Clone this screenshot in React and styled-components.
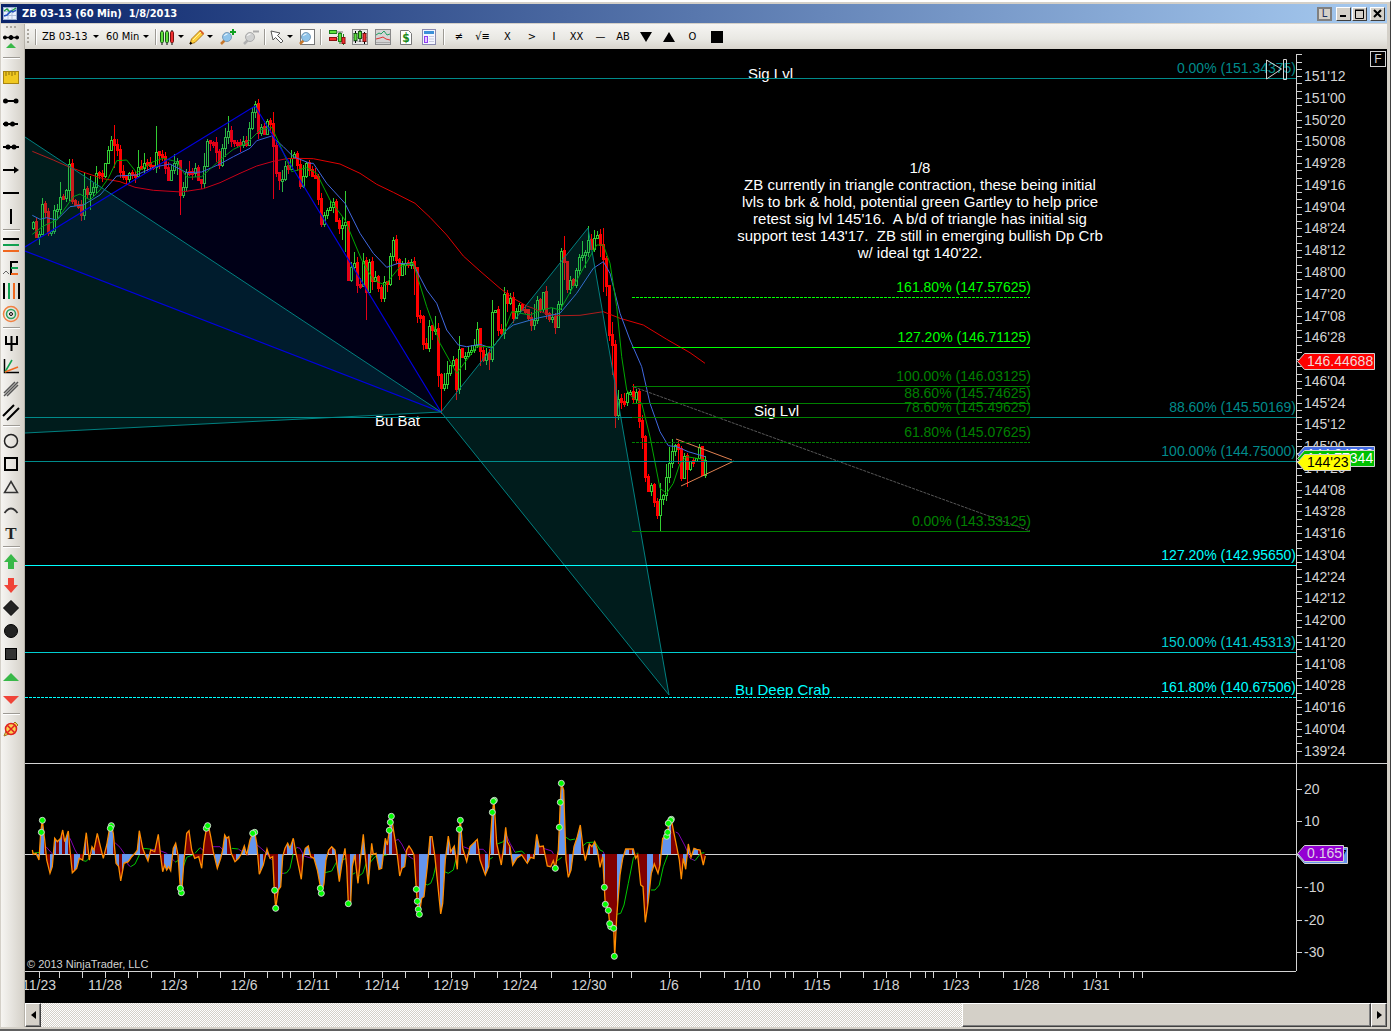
import React from 'react'
import styled, { createGlobalStyle } from 'styled-components'

const GlobalStyle = createGlobalStyle`
	* {
		box-sizing: border-box;
	}
	body {
		margin: 0;
		background-color: #d4d0c8;
	}
	button, select {
		margin: 0;
		padding: 0;
		border: none;
		border-radius: 0;
		background: none;
		color: #000;
		font: inherit;
	}
`

const Frame = styled.div`
	display: flex;
	flex-direction: column;
	min-height: 100vh;
	padding: 2px 3px 2px 1px;
	background-color: #d4d0c8;
	border-top: 2px solid #fff;
	border-right: 1px solid #404040;
	border-bottom: 2px solid #606060;
	font-family: "DejaVu Sans Condensed", "DejaVu Sans", sans-serif;
	font-size: 11px;
`

const TitleBar = styled.header`
	display: flex;
	align-items: center;
	height: 20px;
	padding: 0 2px;
	border-bottom: 1px solid #d4d0c8;
	background: linear-gradient(90deg, #0a246a, #a6caf0);
	color: #fff;
`

const Title = styled.h1`
	flex: 1;
	margin: 0 0 0 4px;
	font-size: 11px;
	font-weight: bold;
	white-space: pre;
`

const WindowButtons = styled.div`
	display: flex;
	align-items: center;
`

const WindowButton = styled.button`
	display: flex;
	align-items: center;
	justify-content: center;
	width: 15px;
	height: 14px;
	margin-left: ${props => props.$gap || 0}px;
	background-color: #d4d0c8;
	border: 1px solid;
	border-color: #fff #404040 #404040 #fff;
`

const LinkButton = styled(WindowButton)`
	border: 2px solid #808080;
	color: #1c2f5c;
`

const Body = styled.div`
	display: flex;
	flex: 1;
`

const SideBar = styled.nav`
	display: flex;
	flex-direction: column;
	align-items: center;
	width: 24px;
	padding-right: 3px;
	background: linear-gradient(90deg, #f6f5f2, #d4d0c8);
	border-right: 1px solid #b5b1a8;
`

const SideTool = styled.button`
	display: flex;
	flex: none;
	align-items: center;
	justify-content: center;
	width: 20px;
	height: ${props => props.$h || 23}px;
`

const SideSeparator = styled.div`
	flex: none;
	width: 17px;
	height: 2px;
	margin: ${props => (props.$wide ? '5px 0' : '2px 0')};
	border-top: 1px solid #9d9a94;
	border-bottom: 1px solid #fff;
`

const SideGrip = styled.div`
	flex: none;
	width: 11px;
	height: 2px;
	margin: 2px 0;
	background: repeating-linear-gradient(90deg, #aaa69e 0 2px, transparent 2px 4px);
`

const Main = styled.main`
	display: flex;
	flex: 1;
	flex-direction: column;
	min-width: 0;
`

const ToolBar = styled.div`
	display: flex;
	align-items: center;
	height: 25px;
	background: linear-gradient(#f6f5f3, #e9e8e3 60%, #d8d4cc);
`

const Grip = styled.div`
	width: 2px;
	height: 15px;
	margin: 0 4px 0 2px;
	background: repeating-linear-gradient(#aaa69e 0 2px, transparent 2px 4px);
`

const Separator = styled.div`
	width: 2px;
	height: 16px;
	margin: 0 ${props => props.$m || 2}px;
	border-left: 1px solid #9d9a94;
	border-right: 1px solid #fff;
`

const Picker = styled.label`
	display: flex;
	align-items: center;
`

const PickerSelect = styled.select`
	appearance: none;
	width: ${props => props.$w}px;
	padding-left: 3px;
	outline: none;
`

const Caret = styled.span`
	width: 0;
	height: 0;
	margin: 0 ${props => props.$m || 0}px;
	border: 3px solid transparent;
	border-top-color: #000;
	border-bottom: 0;
`

const Tool = styled.button`
	display: flex;
	flex: none;
	align-items: center;
	justify-content: center;
	width: ${props => props.$w || 23}px;
	height: 22px;
	font-size: 11px;
`

const DropTool = styled(Tool)`
	width: 29px;
	justify-content: flex-start;
`

const ChartGrid = styled.section`
	display: grid;
	flex: 1;
	grid-template-columns: minmax(0, 1fr) 91px;
	grid-template-rows: minmax(714px, 1fr) 208px 32px;
	background-color: #000;
`

const Cell = styled.div`
	position: relative;
	min-height: 0;
	overflow: hidden;
	border-top: ${props => (props.$line ? '1px solid #d3d3d3' : 'none')};
`

const Drawing = styled.svg`
	display: block;
	width: 100%;
	height: 100%;
	overflow: hidden;
	font-family: "Liberation Sans", Arial, sans-serif;
	font-size: 14px;
`

const Note = styled.p`
	position: absolute;
	top: 110px;
	left: 705px;
	width: 380px;
	margin: 0;
	color: #fff;
	font-family: "Liberation Sans", Arial, sans-serif;
	font-size: 15px;
	line-height: 17px;
	text-align: center;
	white-space: pre;
`

const FixedButton = styled.button`
	position: absolute;
	top: 2px;
	right: 1px;
	width: 16px;
	height: 16px;
	border: 1px solid #d3d3d3;
	color: #d3d3d3;
	font-family: "Liberation Sans", Arial, sans-serif;
	font-size: 12px;
	line-height: 14px;
`

const Copyright = styled.small`
	position: absolute;
	bottom: 0;
	left: 2px;
	color: #d3d3d3;
	font-family: "Liberation Sans", Arial, sans-serif;
	font-size: 11px;
	line-height: 13px;
`

const ScrollBar = styled.div`
	display: flex;
	height: 24px;
	background: repeating-conic-gradient(#d4d0c8 0 25%, #fff 0 50%) 0 0 / 2px 2px;
`

const ScrollButton = styled.button`
	display: flex;
	align-items: center;
	justify-content: center;
	width: 16px;
	background-color: #d4d0c8;
	border: 1px solid;
	border-color: #fff #404040 #404040 #fff;
	box-shadow: inset -1px -1px #808080;
`

const ScrollGap = styled.div`
	flex: 922;
`

const ScrollThumb = styled(ScrollButton)`
	flex: 408;
`

// plot origin inside the window
const LEFT = 25
const PRICE_TOP = 49
const OSC_TOP = 763
const ZERO = 854

// samples are packed at three steps per pixel, relative to a block origin
const unpack = (ox, oy, text) =>
	text.split(' ').map(pair => {
		const [x, y] = pair.split(',').map(Number)
		return [ox + x / 3, oy + y / 3]
	})

const toPath = points => 'M' + points.map(([x, y]) => `${x.toFixed(1)} ${y.toFixed(1)}`).join('L')

const closes = [
	...unpack(20, 90, '37,415 48,425 57,450 62,335 70,345 76,375 84,430 88,385 95,430 98,375 108,370 116,355 124,285 132,320 147,235 150,320 158,310 166,335 176,350 186,360 196,260 206,355 214,270 222,285 230,235 240,250 248,265 258,220 266,175 278,135 285,220 292,190 300,250 312,240 322,270 332,245 342,275 352,260 357,180 364,220 374,200 384,230 392,215 400,230 412,140 420,230 430,200 438,240 446,265 456,240 466,205 474,240 482,360 490,290 498,260 510,225 518,255 528,230 538,270 548,290 555,200 560,155 566,180 576,160 590,210 604,215 612,130 618,185 627,115 636,165 646,170 655,160 662,175 672,150 680,170 690,110 698,75 706,50 710,130 720,120 728,135 736,115 746,95 752,130 758,110 762,300 766,240 774,285 784,290 790,250 800,240 808,245 814,195 824,200 832,230 842,280 850,240 862,230 872,250 882,250'),
	...unpack(280, 90, '105,250 112,300 117,340 122,385 135,390 140,380 150,350 160,345 168,375 176,430 184,435 190,385 196,400 201,550 210,560 218,500 226,530 234,605 240,570 247,505 255,580 262,630 268,515 275,595 285,560 295,600 304,630 312,560 320,600 328,490 335,450 345,475 353,540 362,530 372,550 382,515 392,525 400,515 406,610 414,690 422,690 428,765 440,760 448,690 456,740 463,690 470,770 476,880 481,915 487,890 495,860 505,820 514,850 520,805 531,915 538,740 545,780 553,830 560,780 570,770 580,755 592,710 598,770 604,815 612,780 620,820 628,825 633,715 637,640 645,660 655,710 665,712 671,605 680,650 690,630 697,670 710,660 722,660'),
	...unpack(480, 210, '130,300 140,325 150,330 158,350 166,290 173,260 180,290 188,260 195,300 205,315 214,300 226,355 232,320 240,150 248,110 255,200 262,220 275,215 285,195 295,150 302,95 312,165 322,100 328,115 335,95 345,65 352,80 358,125 367,95 373,240 380,240 385,360 390,390 394,350 398,490 404,600 410,580 416,555 425,590 432,565 445,560 455,535 460,570 468,560 474,625 480,640 484,680 490,700 494,780 503,840 512,830 520,850 528,890 538,910 542,830 550,870 557,820 562,780 570,725 580,700 590,700 597,750 604,790 610,740 617,790 624,740 632,765 640,745 650,745 658,715 666,785 672,770 676,745 682,760'),
]

// long shadows: x, high, low
const spikes = [
	[113, 130, 150], [157, 131, 150], [181, 192, 212], [229, 118, 140], [255, 106, 115], [274, 116, 195],
	[346, 193, 250], [367, 290, 315], [441, 395, 411], [504, 289, 300], [563, 240, 255], [588, 228, 245],
	[603, 233, 260], [615, 400, 423], [660, 500, 531], [686, 470, 484],
]

const slowAverage = [
	...unpack(20, 90, '37,184 100,210 145,230 200,250 250,266 300,275 345,292 400,301 485,306 550,296 600,278 660,250 710,228 760,214 780,210'),
	...unpack(280, 90, '20,206 50,205 100,206 180,222 240,250 290,283 340,307 405,340 450,382 500,435 550,498 600,543 660,595 700,625 740,648'),
	...unpack(480, 210, '160,295 200,312 240,317 300,316 370,305 420,325 490,345 560,388 630,428 675,460'),
]

const midAverage = [
	...unpack(20, 90, '37,376 60,388 80,383 110,390 150,350 190,345 240,315 290,258 350,255 400,232 450,222 500,248 545,246 600,222 640,200 690,175 710,152 755,138 790,170 820,200 870,220'),
	...unpack(280, 90, '100,220 140,280 195,340 240,430 280,490 320,532 355,520 400,523 440,600 470,640 500,720 535,765 560,770 600,763 635,775 680,720'),
	...unpack(480, 210, '100,345 170,325 240,310 290,250 340,175 370,155 390,190 420,310 450,390 485,470 510,580 540,665 565,707 590,710 625,725 676,740'),
]

const fastAverage = [
	...unpack(20, 90, '37,433 70,408 110,390 160,320 180,312 210,330 240,300 265,265 290,212 320,210 350,248 400,215 430,205 470,215 500,262 545,260 600,210 640,178 680,160 720,120 755,112 780,165 815,245 860,233'),
	...unpack(280, 90, '110,250 150,330 195,390 245,510 280,570 315,585 360,530 400,520 440,650 480,760 530,850 590,770 640,770 670,730'),
	...unpack(480, 210, '95,305 150,315 185,300 215,293 240,300 280,230 310,175 350,105 370,105 390,160 410,290 425,440 440,540 455,560 485,580 510,680 540,835 560,850 580,820 600,760 620,740 650,745 676,750'),
]

const oscillator = [
	...unpack(20, 770, '37,240 40,253 48,250 57,270 62,187 67,150 74,210 80,270 90,310 97,290 104,205 112,215 122,205 128,180 134,215 145,183 150,240 157,308 170,295 178,265 188,270 199,188 208,270 216,230 222,240 232,190 240,225 250,265 260,225 268,180 274,165 280,190 288,280 296,290 302,333 312,280 325,275 335,260 345,250 352,240 358,182 368,235 376,255 384,273 392,240 404,245 415,193 422,260 428,305 434,285 440,300 446,290 452,302 460,235 467,220 474,255 481,355 485,367 492,270 500,190 507,182 515,240 524,265 536,260 545,295 552,220 560,170 565,165 572,200 580,245 592,295 602,265 608,240 614,195 620,205 626,200 634,250 645,275 656,265 665,250 673,228 680,255 690,210 698,190 704,187 710,220 718,313 730,285 741,237 750,265 758,260 763,361 767,415 775,360 782,350 788,260 795,235 803,220 810,235 820,205 828,250 836,290 844,328 850,260 856,235 865,228 872,260 882,265 892,300 902,355 905,370 912,340 918,270 926,240 935,230 945,240 952,290 958,335 966,280 975,235 980,290 985,400 992,395 997,290 1004,255 1014,340 1022,260 1030,193 1036,260 1045,343'),
	...unpack(370, 770, '5,220 10,253 18,250 27,298 35,295 46,205 52,225 58,181 64,139 72,190 80,240 89,318 96,295 104,290 110,240 117,228 125,240 132,255 139,358 142,394 148,433 155,385 162,380 172,290 180,200 186,200 194,255 204,350 212,432 218,400 226,270 235,198 242,245 253,228 262,298 268,178 271,151 278,235 290,275 300,230 312,218 322,208 330,270 346,315 356,290 367,127 372,92 380,220 394,285 400,240 407,172 412,215 420,230 428,285 440,265 455,255 472,280 482,262 492,265 500,193 508,230 520,228 532,288 542,290 550,272 556,295 565,240 568,172 571,97 574,40 581,60 588,270 595,322 603,300 612,230 622,200 631,165 640,240 646,272 658,222 666,230 674,215 682,240 690,292 698,260 703,352 706,403 715,421 719,461 726,470 731,475 734,560 740,440 750,315 758,265 767,237 790,237 797,265 803,255 812,345 819,350 826,457 834,400 844,310 853,282 864,310 870,285 878,205 890,200 893,187 896,160 904,148 912,190 920,230 928,270 934,328 940,265 947,298 955,222 963,262 972,235 980,238 990,240 1000,285 1006,258'),
]

const signals = [
	...unpack(20, 770, '64,187 67,151 274,167 271,175 484,368 481,355 559,175 563,167 704,187 698,190 764,361 767,415 904,370 901,355 985,401'),
	...unpack(370, 770, '58,181 61,157 64,139 139,358 142,394 145,418 148,433 268,178 271,151 367,127 373,91 370,94 556,295 568,172 571,97 574,40 703,352 706,403 715,421 722,470 731,475 719,461 733,559 890,199 893,187 904,148 902,151 895,160'),
]

const GREEN = '#00c800'
const PURPLE = '#8000b0'

const trend = [
	[GREEN, unpack(20, 770, '37,250 60,247')],
	[PURPLE, unpack(20, 770, '78,230 100,255')],
	[PURPLE, unpack(20, 770, '150,205 165,240 180,265 190,272')],
	[GREEN, unpack(20, 770, '190,272 198,274 205,268 212,255')],
	[PURPLE, unpack(20, 770, '285,218 300,232 312,250 325,285 332,290')],
	[GREEN, unpack(20, 770, '332,290 345,282 358,255')],
	[GREEN, unpack(20, 770, '370,235 395,238')],
	[PURPLE, unpack(20, 770, '395,238 420,242 440,250 465,275')],
	[GREEN, unpack(20, 770, '465,277 480,268')],
	[GREEN, unpack(20, 770, '490,290 500,262 518,255')],
	[GREEN, unpack(20, 770, '525,250 540,233')],
	[PURPLE, unpack(20, 770, '540,233 552,243')],
	[PURPLE, unpack(20, 770, '578,230 600,230 608,240')],
	[GREEN, unpack(20, 770, '635,235 655,237')],
	[PURPLE, unpack(20, 770, '655,237 685,256')],
	[PURPLE, unpack(20, 770, '708,222 735,245 755,270')],
	[PURPLE, unpack(20, 770, '783,310 792,310')],
	[GREEN, unpack(20, 770, '792,310 800,308 810,295 820,250 830,232')],
	[PURPLE, unpack(20, 770, '830,232 840,235 852,258 875,265')],
	[GREEN, unpack(20, 770, '915,308 935,303 950,275 980,265')],
	[GREEN, unpack(20, 770, '998,313 1006,308')],
	[GREEN, unpack(20, 770, '1018,317 1028,310 1040,275 1065,250')],
	[GREEN, unpack(370, 770, '0,278 15,260 50,255')],
	[PURPLE, unpack(370, 770, '76,212 85,208 95,222 112,255 130,268')],
	[GREEN, unpack(370, 770, '165,340 172,345 182,340 190,320 198,285')],
	[GREEN, unpack(370, 770, '224,305 235,310 250,300 258,268')],
	[PURPLE, unpack(370, 770, '280,230 300,238 340,238 350,250')],
	[GREEN, unpack(370, 770, '356,270 368,262')],
	[GREEN, unpack(370, 770, '382,222 400,215 410,198')],
	[PURPLE, unpack(370, 770, '410,198 420,220 435,247')],
	[GREEN, unpack(370, 770, '435,247 455,243 470,258 495,255')],
	[PURPLE, unpack(370, 770, '520,235 545,243 555,260')],
	[GREEN, unpack(370, 770, '562,272 575,262')],
	[GREEN, unpack(370, 770, '588,202 600,210 615,207')],
	[GREEN, unpack(370, 770, '638,228 650,218 675,216 690,240 700,245')],
	[PURPLE, unpack(370, 770, '700,245 706,262')],
	[GREEN, unpack(370, 770, '742,433 752,430 762,405 775,340 790,265 803,248')],
	[GREEN, unpack(370, 770, '843,360 855,360 868,345 880,290 893,255')],
	[PURPLE, unpack(370, 770, '917,186 925,190 945,228 960,265 975,272')],
	[GREEN, unpack(370, 770, '975,272 992,250 1003,248')],
]

const sample = (points, x) => {
	const next = points.findIndex(point => point[0] >= x)
	if (next < 0) return points[points.length - 1][1]
	if (next === 0) return points[0][1]
	const [x1, y1] = points[next - 1]
	const [x2, y2] = points[next]
	return y1 + ((y2 - y1) * (x - x1)) / (x2 - x1 || 1)
}

const wobble = n => {
	const s = Math.sin(n * 12.9898) * 43758.5453
	return s - Math.floor(s)
}

const buildCandles = () => {
	let up = ''
	let down = ''
	let open = sample(closes, 32)
	for (let i = 0; i < 225; i++) {
		const x = 33 + i * 3
		const close = Math.round(sample(closes, x) + (wobble(i) - 0.5) * 13)
		const near = closes.filter(point => Math.abs(point[0] - x) <= 1.5).map(point => point[1])
		spikes.filter(spike => Math.abs(spike[0] - x) <= 1).forEach(spike => near.push(spike[1], spike[2]))
		const high = Math.round(Math.min(open, close, ...near) - wobble(i + 400) * 6)
		const low = Math.round(Math.max(open, close, ...near) + wobble(i + 900) * 6)
		const top = Math.round(Math.min(open, close))
		const size = Math.max(2, Math.round(Math.abs(open - close)))
		if (close < open) {
			up += `M${x + 0.5} ${high}V${top}M${x + 0.5} ${top + size}V${low}M${x - 0.5} ${top + 0.5}h2v${size}h-2z`
		} else {
			down += `M${x} ${high}h1V${low}h-1zM${x - 1} ${top - 1}h3v${size + 2}h-3z`
		}
		open = close
	}
	return { up, down }
}

// full height columns, the outline clips them to the curve
const buildBars = () => {
	let rising = ''
	let falling = ''
	for (let x = 33; x < 706; x += 3) {
		const slope = sample(oscillator, x + 1) - sample(oscillator, x - 2)
		const bar = `M${x - 1} 764h3v207h-3z`
		const flipped = wobble(x) > 0.85
		if (slope < 0 !== flipped) rising += bar
		else falling += bar
	}
	return { rising, falling }
}

const candles = buildCandles()
const bars = buildBars()

const levels = [
	{ y: 78, label: '0.00% (151.34375)', color: '#008b8b' },
	{ y: 417, label: '88.60% (145.50169)', color: '#008b8b' },
	{ y: 461, label: '100.00% (144.75000)', color: '#008b8b' },
	{ y: 565, label: '127.20% (142.95650)', color: '#00ffff' },
	{ y: 652, label: '150.00% (141.45313)', color: '#00ced1' },
	{ y: 697, label: '161.80% (140.67506)', color: '#00ffff', dash: '3 1' },
]

const targets = [
	{ y: 297, label: '161.80% (147.57625)', color: '#00ff00', dash: '3 1' },
	{ y: 347, label: '127.20% (146.71125)', color: '#00ff00' },
	{ y: 386, label: '100.00% (146.03125)', color: '#008000' },
	{ y: 403, label: '88.60% (145.74625)', color: '#008000' },
	{ y: 417, label: '78.60% (145.49625)', color: '#008000' },
	{ y: 442, label: '61.80% (145.07625)', color: '#008000', dash: '3 1' },
	{ y: 531, label: '0.00% (143.53125)', color: '#008000' },
]

// 32nds, from 151'24 down to 139'24
const priceTicks = Array.from({ length: 97 }, (_, i) => {
	const price = 151.75 - i / 8
	const whole = Math.floor(price)
	return {
		y: Math.round(78 + (151.34375 - price) * 58.02),
		// 146'16 stays free for the moving average tag
		label: i % 3 === 0 && i > 0 && price !== 146.5 ? `${whole}'${String((price - whole) * 32).padStart(2, '0')}` : null,
	}
})

const dates = [
	[39, '11/23'], [105, '11/28'], [174, '12/3'], [244, '12/6'], [313, '12/11'], [382, '12/14'],
	[451, '12/19'], [520, '12/24'], [589, '12/30'], [669, '1/6'], [747, '1/10'], [817, '1/15'],
	[886, '1/18'], [956, '1/23'], [1026, '1/28'], [1096, '1/31'],
]

const dateTicks = [
	39, 59, 82, 105, 128, 151, 174, 197, 220, 244, 267, 282, 290, 313, 336, 359, 382, 405, 428, 451, 474, 497,
	520, 551, 589, 612, 631, 669, 700, 724, 747, 770, 785, 793, 817, 840, 863, 886, 910, 925, 933, 956, 979,
	1003, 1026, 1049, 1064, 1072, 1096, 1119, 1133, 1142,
]

const PricePlot = () => (
	<Drawing role="img" aria-label="ZB 03-13 price">
		<g transform={`translate(${-LEFT} ${-PRICE_TOP})`}>
			<g fill="#fff" fontSize="15">
				<text x="748" y="79">Sig Lvl</text>
				<text x="754" y="416">Sig Lvl</text>
				<text x="375" y="426">Bu Bat</text>
				<text x="735" y="695" fill="#00ffff">Bu Deep Crab</text>
			</g>
			<g shapeRendering="crispEdges">
				<path d={candles.up} fill="#000" stroke="#32cd32" />
				<path d={candles.down} fill="#ff0000" />
			</g>
			<g fill="none">
				<path d={toPath(slowAverage)} stroke="#e00000" />
				<path d={toPath(midAverage)} stroke="#4169e1" />
				<path d={toPath(fastAverage)} stroke="#00a800" />
			</g>
			<path d="M25 247L255 106L441 412L25 251z" fill="#0000cd" fillOpacity=".11" />
			<path d="M25 137L441 412L25 433zM441 412L588 228L669 695z" fill="#008080" fillOpacity=".22" />
			<path d="M25 247L255 106L441 412L25 251" fill="none" stroke="#0000e0" strokeWidth="1.2" />
			<path d="M25 137L441 412L25 433M441 412L588 228L669 695z" fill="none" stroke="#008080" />
			<path d="M634 387L1030 531" stroke="#585858" strokeDasharray="3 1" />
			<path d="M676 439L732 460M681 486L734 461" stroke="#e08050" />
		</g>
		{levels.map(level => (
			<g key={level.y} shapeRendering="crispEdges">
				<line x1="0" x2="100%" y1={level.y - PRICE_TOP + 0.5} y2={level.y - PRICE_TOP + 0.5} stroke={level.color} strokeDasharray={level.dash} />
				<text x="100%" y={level.y - PRICE_TOP - 5} fill={level.color} textAnchor="end">{level.label}</text>
			</g>
		))}
		<g transform={`translate(${-LEFT} ${-PRICE_TOP})`} shapeRendering="crispEdges">
			{targets.map(target => (
				<g key={target.y}>
					<line x1="632" x2="1030" y1={target.y + 0.5} y2={target.y + 0.5} stroke={target.color} strokeDasharray={target.dash} />
					<text x="1031" y={target.y - 5} fill={target.color} textAnchor="end">{target.label}</text>
				</g>
			))}
		</g>
		<svg x="100%" overflow="visible">
			<path d="M-29.500 11V30L-14.500 20zM-12.500 10.500h3v20h-3z" fill="none" stroke="#d3d3d3" />
		</svg>
	</Drawing>
)

const Tag = ({ y, width, color, ink, children }) => (
	<g>
		<path d={`M1.5 ${y + 8.5}l7 -8h${width - 8}v16h${8 - width}z`} fill={color} stroke="#d3d3d3" />
		<text x="11" y={y + 13} fill={ink}>{children}</text>
	</g>
)

const PriceAxis = () => (
	<Drawing role="img" aria-label="Price axis">
		<path d={'M.5 5V2000' + priceTicks.map(tick => `M0 ${tick.y - PRICE_TOP + 0.5}h6`).join('')} stroke="#d3d3d3" shapeRendering="crispEdges" />
		<g fill="#d3d3d3">
			{priceTicks.filter(tick => tick.label).map(tick => (
				<text key={tick.label} x="8" y={tick.y - PRICE_TOP + 5}>{tick.label}</text>
			))}
		</g>
		<Tag y={304} width={78} color="#ff0000" ink="#f0d8d8">146.44688</Tag>
		<Tag y={397} width={78} color="#4169e1" ink="#fff">144.84733</Tag>
		<Tag y={401} width={78} color="#00c000" ink="#fff">144.77344</Tag>
		<Tag y={405} width={54} color="#ffff00" ink="#000">144'23</Tag>
	</Drawing>
)

const OscillatorPlot = () => (
	<Drawing role="img" aria-label="Oscillator">
		<clipPath id="curve">
			<path d={`${toPath(oscillator)}V${ZERO}H32z`} />
		</clipPath>
		<line x1="0" x2="100%" y1={ZERO - OSC_TOP - 0.5} y2={ZERO - OSC_TOP - 0.5} stroke="#d3d3d3" />
		<g transform={`translate(${-LEFT} ${-OSC_TOP - 1})`}>
			{trend.map(([color, points]) => (
				<path key={points[0].join()} d={toPath(points)} fill="none" stroke={color} />
			))}
			<g clipPath="url(#curve)" shapeRendering="crispEdges">
				<path d={bars.rising} fill="#6495ed" />
				<path d={bars.falling} fill="#800000" />
			</g>
			<path d={toPath(oscillator)} fill="none" stroke="#ff8c00" strokeWidth="1.300" />
			<g fill="#00ff00" stroke="#d3d3d3">
				{signals.map(([x, y]) => (
					<circle key={`${x}-${y}`} cx={x} cy={y} r="3" />
				))}
			</g>
		</g>
	</Drawing>
)

const OscillatorAxis = () => (
	<Drawing role="img" aria-label="Oscillator axis">
		<path d="M.5 0V208M0 25.500h6M0 57.500h6M0 90.500h6M0 123.500h6M0 156.500h6M0 188.500h6" stroke="#d3d3d3" shapeRendering="crispEdges" />
		<g fill="#d3d3d3">
			<text x="8" y="30">20</text>
			<text x="8" y="62">10</text>
			<text x="8" y="128">-10</text>
			<text x="8" y="161">-20</text>
			<text x="8" y="193">-30</text>
		</g>
		<Tag y={83} width={51} color="#6495ed" ink="#000">-0.237</Tag>
		<Tag y={81} width={47} color="#9400d3" ink="#e0d0e8">0.165</Tag>
	</Drawing>
)

const TimeAxis = () => (
	<Drawing role="img" aria-label="Time axis">
		<path d={dateTicks.map(x => `M${x - LEFT + 0.5} 0v6`).join('')} stroke="#d3d3d3" shapeRendering="crispEdges" />
		<g fill="#d3d3d3" textAnchor="middle">
			{dates.map(([x, label]) => (
				<text key={x} x={x - LEFT} y="18">{label}</text>
			))}
		</g>
	</Drawing>
)

const Icon = ({ children }) => (
	<svg width="18" height="18" viewBox="0 0 18 18" fill="none" stroke="#000" aria-hidden="true">{children}</svg>
)

const lens = faded => (
	<>
		<path d="M2 16l4-4" stroke={faded ? '#b0b0b0' : '#c8782c'} strokeWidth="2.500" />
		<circle cx="8" cy="9" r="4.500" fill={faded ? '#cfd0d0' : '#8fc4ea'} stroke={faded ? '#aaa' : '#7a9cb8'} />
		<path d="M5.500 8a3 3 0 0 1 3-2" stroke="#fff" />
	</>
)

const toolIcons = {
	candles: (
		<>
			<path d="M3 2v15M8 2v15M13 2v15" />
			<rect x="1.500" y="3.500" width="3" height="11" rx="1" fill="#5fe03c" stroke="#185818" />
			<rect x="6.500" y="3.500" width="3" height="11" rx="1" fill="#5fe03c" stroke="#185818" />
			<rect x="11.500" y="3.500" width="3" height="11" rx="1" fill="#f03030" stroke="#781010" />
		</>
	),
	pencil: (
		<>
			<path d="M2 16l1.500-5L12 2.500l3.500 3.500L7 14.500z" fill="#fccf3c" stroke="#b07818" />
			<path d="M12 2.500l3.500 3.500" stroke="#d8602c" strokeWidth="2" />
			<path d="M2 16l1.500-1.500" strokeWidth="2" />
			<path d="M5 12l8-8" stroke="#fff0a0" />
		</>
	),
	zoomIn: <>{lens(false)}<path d="M14 1v6M11 4h6" stroke="#10a020" strokeWidth="2" /></>,
	zoomOut: <>{lens(true)}<path d="M11 3.500h6" stroke="#aaa" strokeWidth="2" /></>,
	pointer: <path d="M3 3l2 9 2.500-2.500L13 15l2-2-5.500-5.500L12 5z" fill="#fff" stroke="#555" />,
	page: <><rect x="2.500" y="1.500" width="14" height="15" fill="#fff" stroke="#777" />{lens(false)}</>,
	dom: (
		<>
			<rect x="1.500" y="2.500" width="7" height="3" fill="#5fe03c" stroke="#188018" />
			<rect x="1.500" y="9.500" width="7" height="3" fill="#f03030" stroke="#901010" />
			<path d="M8 4h7M9 8.500h4M9 11h4" stroke="#777" />
			<path d="M12 4v12M15.500 6v11" stroke="#188018" />
			<rect x="10.500" y="5.500" width="3" height="8" fill="#5fe03c" stroke="#188018" />
			<rect x="14" y="9.500" width="3" height="6" fill="#f03030" stroke="#901010" />
		</>
	),
	chart: (
		<>
			<rect x="1.500" y="1.500" width="15" height="15" fill="#e8e8e8" stroke="#888" />
			<path d="M2 5.500h14M2 9.500h14M2 13.500h14" stroke="#bbb" />
			<path d="M4.500 3v12M9 2v12M13.500 4v12" />
			<rect x="3" y="5.500" width="3" height="7" fill="#5fe03c" stroke="#185818" />
			<rect x="7.500" y="3.500" width="3" height="7" fill="#5fe03c" stroke="#185818" />
			<rect x="12" y="5.500" width="3" height="8" fill="#f03030" stroke="#781010" />
		</>
	),
	lines: (
		<>
			<rect x="1.500" y="1.500" width="15" height="15" fill="#d4d4d4" stroke="#888" />
			<path d="M2 7l3-2 2 1 3-3 3 4 3-1" stroke="#20a060" />
			<path d="M2 11l4-1 3-1 3 2 4 1" stroke="#e03030" />
			<path d="M2 14.500h14" stroke="#aaa" />
		</>
	),
	dollar: (
		<>
			<path d="M3.500 2.500h8l3 3v11h-11z" fill="#fff" stroke="#777" />
			<text x="9" y="14" fill="#1c8c1c" stroke="none" fontSize="12" fontWeight="bold" textAnchor="middle">$</text>
		</>
	),
	panel: (
		<>
			<rect x="2.500" y="1.500" width="13" height="15" fill="#f4f6ff" stroke="#8a8ab0" />
			<path d="M4 4.500h10" stroke="#3c90d8" strokeWidth="3" />
			<rect x="4.500" y="8.500" width="3" height="6" fill="#e8c8ff" stroke="#9040f0" />
			<path d="M9 8.500h5M9 11h5M9 13.500h5" stroke="#c8cce0" />
		</>
	),
}

const sideGroups = [
	[
		['ruler', <><rect x="1.500" y="3.500" width="15" height="12" fill="#f0c820" stroke="#a88410" /><path d="M4 4v4M7 4v3M10 4v4M13 4v3" stroke="#8c6c08" /></>],
		['line', <><path d="M2 9h14" strokeWidth="2" /><circle cx="3.500" cy="9" r="2.500" fill="#000" stroke="none" /><circle cx="14" cy="9" r="2.500" fill="#000" stroke="none" /></>],
		['ray', <><path d="M1 9h15" strokeWidth="2" /><circle cx="4" cy="9" r="2.500" fill="#000" stroke="none" /><circle cx="10.500" cy="9" r="2.500" fill="#000" stroke="none" /></>],
		['extended line', <><path d="M1 9h16" strokeWidth="2" /><circle cx="6" cy="9" r="2.500" fill="#000" stroke="none" /><circle cx="12" cy="9" r="2.500" fill="#000" stroke="none" /></>],
		['arrow line', <><path d="M1 9h13" strokeWidth="2" /><path d="M12 5.500l5 3.500-5 3.500z" fill="#000" stroke="none" /></>],
		['horizontal line', <path d="M1 9h16" strokeWidth="2" />],
		['vertical line', <path d="M9 2v15" strokeWidth="2" />],
	],
	[
		['retracement', <g strokeWidth="2"><path d="M1 3h16" /><path d="M1 9h16" stroke="#10a050" /><path d="M1 15h16" stroke="#f06820" /></g>],
		['extension', <g strokeWidth="2"><path d="M9 16V3h7" /><path d="M9 9h7" stroke="#10a050" /><path d="M9 15h7" stroke="#f06820" /><path d="M1 15l3-3 3 3" stroke="#666" strokeWidth="1" /></g>],
		['time extension', <g strokeWidth="2"><path d="M2 1v16M17 1v16" /><path d="M7 1v16" stroke="#10a050" /><path d="M12 1v16" stroke="#f06820" /></g>],
		['circles', <><circle cx="9" cy="9" r="7.500" stroke="#f08040" strokeWidth="1.500" /><circle cx="9" cy="9" r="4.500" stroke="#30a060" strokeWidth="1.500" /><circle cx="9" cy="9" r="1.500" /></>],
	],
	[
		['pitchfork', <path d="M4 2v8h11V2M9.500 2v15" strokeWidth="2" />],
		['gann fan', <g strokeWidth="1.500"><path d="M2.500 2v13.500H17" /><path d="M3 15L10 3" stroke="#10a050" /><path d="M3 15l13-5" stroke="#f06820" /></g>],
		['regression channel', <path d="M2 13L13 2M2 16L16 2M5 16L16 5" stroke="#555" strokeWidth="1.500" />],
		['trend channel', <path d="M1 13L12 2M5 17L17 5" strokeWidth="2" />],
	],
	[
		['ellipse', <circle cx="9" cy="9" r="6.500" stroke="#222" strokeWidth="1.500" />],
		['rectangle', <rect x="3" y="3" width="12" height="12" strokeWidth="2" />],
		['triangle', <path d="M9 3.500l6.500 11h-13z" stroke="#333" strokeWidth="1.500" />],
		['arc', <path d="M2.500 12q6.500-9 13 0" stroke="#333" strokeWidth="1.800" />],
		['text', <text x="9" y="15" fill="#222" stroke="none" fontSize="17" fontWeight="bold" fontFamily="Liberation Serif, serif" textAnchor="middle">T</text>],
	],
	[
		['arrow up', <path d="M9 1l7 8h-4v7H6V9H2z" fill="#38b848" stroke="none" />],
		['arrow down', <path d="M9 17l7-8h-4V2H6v7H2z" fill="#f04438" stroke="none" />],
		['diamond', <path d="M9 1.500l7.500 7.500L9 16.500 1.500 9z" fill="#222" />],
		['dot', <circle cx="9" cy="9" r="6.500" fill="#222" />],
		['square', <rect x="3.500" y="3.500" width="11" height="11" fill="#333" />],
		['triangle up', <path d="M9 5l8 8H1z" fill="#38b848" stroke="none" />],
		['triangle down', <path d="M9 13l8-8H1z" fill="#f04438" stroke="none" />],
	],
	[
		['remove drawings', <><path d="M2 16l2-5 9-9 3 3-9 9z" fill="#f8d050" stroke="#a07020" /><circle cx="9" cy="9" r="5.500" fill="#f8d050" stroke="#e02020" strokeWidth="1.500" /><path d="M5.500 5.500l7 7M12.500 5.500l-7 7" stroke="#e02020" strokeWidth="1.500" /></>],
	],
]

const textTools = [
	['≠', 22], ['√≡', 25], ['X', 25], ['>', 24], ['I', 20], ['XX', 25], ['—', 23], ['AB', 22],
]

const IconTool = ({ name, w }) => (
	<Tool $w={w} aria-label={name}><Icon>{toolIcons[name]}</Icon></Tool>
)

const IconDrop = ({ name }) => (
	<DropTool aria-label={name}><Icon>{toolIcons[name]}</Icon><Caret $m={1} /></DropTool>
)

const App = () => (
	<>
		<GlobalStyle />
		<Frame>
			<TitleBar>
				<svg width="15" height="15" viewBox="0 0 15 15" fill="none" aria-hidden="true">
					<rect x=".5" y="1.500" width="13" height="12" fill="#e8f0ff" stroke="#9cb0d0" />
					<path d="M1 5.500h12M1 9.500h12M5 2v11M9 2v11" stroke="#b0c0dc" />
					<path d="M1 5l3-2 3 3 6-4" stroke="#20a040" strokeWidth="1.500" />
					<path d="M1 10l3-1 4-4 2 1 3-2" stroke="#2050c0" strokeWidth="1.500" />
				</svg>
				<Title>ZB 03-13 (60 Min)  1/8/2013</Title>
				<WindowButtons>
					<LinkButton>L</LinkButton>
					<WindowButton $gap={4} aria-label="Minimize"><svg width="9" height="9"><path d="M1 7h6" stroke="#000" strokeWidth="2" /></svg></WindowButton>
					<WindowButton $gap={1} aria-label="Maximize"><svg width="11" height="10"><path d="M1.500 1v8.500h8V1M1 1h9" fill="none" stroke="#000" /><path d="M1 1.500h9" stroke="#000" /></svg></WindowButton>
					<WindowButton $gap={3} aria-label="Close"><svg width="9" height="9"><path d="M1 1l7 7M8 1L1 8" stroke="#000" strokeWidth="2" /></svg></WindowButton>
				</WindowButtons>
			</TitleBar>
			<Body>
				<SideBar>
					<SideGrip />
					<SideTool $h={22} aria-label="drawing tool">
						<Icon>
							<path d="M1 5.500h16" strokeWidth="1.500" />
							<circle cx="3" cy="5.500" r="1.500" fill="#000" />
							<circle cx="9" cy="5.500" r="2" fill="#000" />
							<circle cx="15" cy="5.500" r="1.500" fill="#000" />
							<path d="M9 11l5 5H4z" fill="#38b848" stroke="none" />
						</Icon>
					</SideTool>
					<SideSeparator $wide />
					{sideGroups.map((group, index) => (
						<React.Fragment key={group[0][0]}>
							{index > 0 && <SideSeparator />}
							{group.map(([name, shape]) => (
								<SideTool key={name} $h={name === 'ruler' ? 25 : 23} aria-label={name}><Icon>{shape}</Icon></SideTool>
							))}
						</React.Fragment>
					))}
				</SideBar>
				<Main>
					<ToolBar>
						<Grip />
						<Separator />
						<Picker>
							<PickerSelect $w={50} aria-label="Instrument"><option>ZB 03-13</option></PickerSelect>
							<Caret $m={4} />
						</Picker>
						<Picker>
							<PickerSelect $w={36} aria-label="Interval"><option>60 Min</option></PickerSelect>
							<Caret $m={4} />
						</Picker>
						<Separator />
						<IconDrop name="candles" />
						<IconDrop name="pencil" />
						<IconTool name="zoomIn" w={22} />
						<IconTool name="zoomOut" />
						<Separator />
						<IconDrop name="pointer" />
						<IconTool name="page" w={20} />
						<Separator $m={3} />
						<IconTool name="dom" />
						<IconTool name="chart" />
						<IconTool name="lines" />
						<IconTool name="dollar" />
						<IconTool name="panel" />
						<Separator $m={3} />
						{textTools.map(([label, w]) => (
							<Tool key={label} $w={w}>{label}</Tool>
						))}
						<Tool aria-label="Triangle down"><svg width="12" height="10"><path d="M0 0h12L6 10z" /></svg></Tool>
						<Tool aria-label="Triangle up"><svg width="12" height="10"><path d="M0 10h12L6 0z" /></svg></Tool>
						<Tool $w={25}>O</Tool>
						<Tool aria-label="Square"><svg width="12" height="12"><path d="M0 0h12v12H0z" /></svg></Tool>
					</ToolBar>
					<ChartGrid>
						<Cell>
							<PricePlot />
							<Note>{`1/8
ZB currently in triangle contraction, these being initial
lvls to brk & hold, potential green Gartley to help price
retest sig lvl 145'16.  A b/d of triangle has initial sig
support test 143'17.  ZB still in emerging bullish Dp Crb
w/ ideal tgt 140'22.`}</Note>
						</Cell>
						<Cell>
							<PriceAxis />
							<FixedButton>F</FixedButton>
						</Cell>
						<Cell $line>
							<OscillatorPlot />
							<Copyright>© 2013 NinjaTrader, LLC</Copyright>
						</Cell>
						<Cell $line>
							<OscillatorAxis />
						</Cell>
						<Cell $line>
							<TimeAxis />
						</Cell>
						<Cell />
					</ChartGrid>
					<ScrollBar>
						<ScrollButton aria-label="Scroll left"><svg width="5" height="8"><path d="M5 0v8L0 4z" /></svg></ScrollButton>
						<ScrollGap />
						<ScrollThumb aria-label="Scroll position" />
						<ScrollButton aria-label="Scroll right"><svg width="5" height="8"><path d="M0 0v8l5-4z" /></svg></ScrollButton>
					</ScrollBar>
				</Main>
			</Body>
		</Frame>
	</>
)

export default App
